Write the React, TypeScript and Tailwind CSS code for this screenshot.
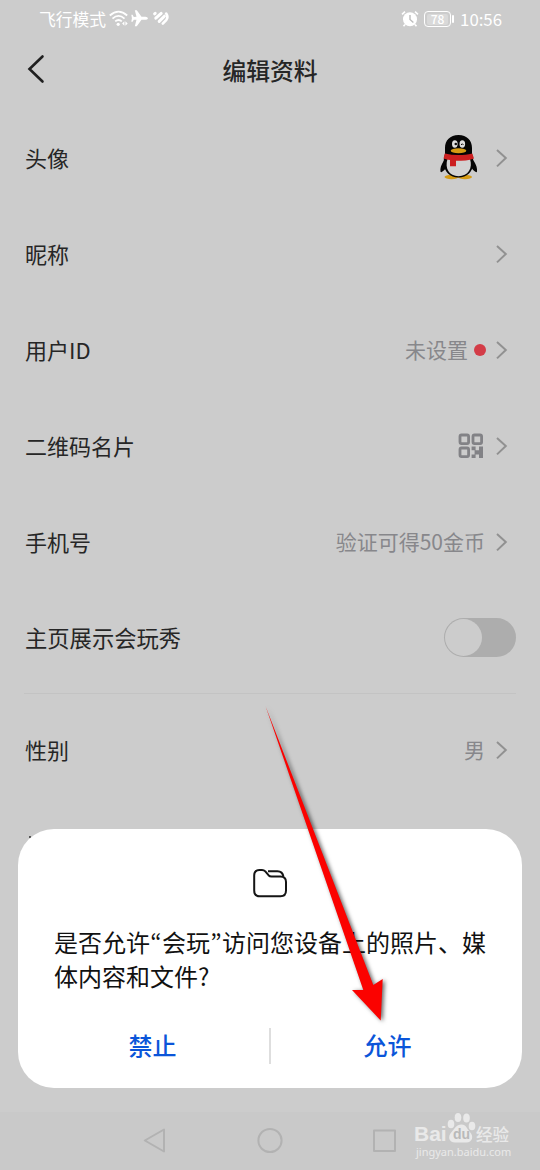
import type { ReactNode } from "react";

interface SettingRowProps {
	label: string;
	children?: ReactNode;
}

function ChevronRight() {
	return (
		<svg
			className="h-[22px] w-3"
			viewBox="0 0 12 22"
			fill="none"
			stroke="#919191"
			strokeWidth="2"
		>
			<path d="M1 3 L9.8 11 L1 19.4" />
		</svg>
	);
}

function SettingRow({ label, children }: SettingRowProps) {
	return (
		<div className="flex h-24 items-center justify-between pr-8 pl-[25px]">
			<span className="pb-[2px] text-[22px] leading-8 text-[#262626]">
				{label}
			</span>
			<div className="flex items-center text-[21px] leading-8 text-[#87878b]">
				{children}
				<ChevronRight />
			</div>
		</div>
	);
}

function StatusBar() {
	return (
		<div className="flex h-[38px] items-center justify-between pr-[38px] pl-[39px] text-white">
			<div className="flex items-center">
				<span className="pb-px text-[16.8px] leading-6">飞行模式</span>
				<svg className="ml-[3px] h-5 w-[60px]" viewBox="0 0 60 20" fill="none">
					<g stroke="white" strokeWidth="1.8">
						<path d="M0.8 6.5 Q9.5 -1.2 18.2 6.5" />
						<path d="M3.5 9.6 Q9.5 4.2 15.5 9.6" />
						<path d="M6.2 12.4 Q9.5 9.6 12.8 12.4" />
					</g>
					<circle cx="9.2" cy="15.3" r="1.6" fill="white" />
					<path d="M15.4 12.2v4.5l-2.3-2.2zM16.4 12.2v4.5l2.3-2.2z" fill="white" />
					<path
						d="M39 9.3Q38.5 10.8 36.5 10.8L32.5 10.8L27.8 17.3L25.8 17.3L27.5 10.8L24.8 10.7L23.6 12.8L22.3 12.8L22.9 9.3L22.3 5.8L23.6 5.8L24.8 7.9L27.5 7.8L25.8 1.3L27.8 1.3L32.5 7.8L36.5 7.8Q38.5 7.8 39 9.3Z"
						fill="white"
					/>
					<g stroke="white" strokeWidth="3" strokeLinecap="round">
						<path d="M45.6 4.8 L46.2 4.3" />
						<path d="M46.8 9.2 L52.2 4.4" />
						<path d="M50.2 12.4 L55.4 7.2" />
						<path d="M53.8 14.6 L57.4 10.8 Q59.5 8 57.2 4.5" strokeWidth="2.6" />
					</g>
				</svg>
			</div>
			<div className="flex items-center">
				<svg className="h-[18px] w-[18px]" viewBox="0 0 18 18" fill="none">
					<circle cx="9" cy="9.2" r="7" fill="white" />
					<path
						d="M1 4.4 L4 1.6 M17 4.4 L14 1.6 M4 14.5 L2.5 16.3 M14 14.5 L15.5 16.3"
						stroke="white"
						strokeWidth="1.6"
					/>
					<path d="M9 5v4.5l3.4 3" stroke="#bdbdbd" strokeWidth="1.4" />
				</svg>
				<div className="ml-[5px] flex h-4 w-[27px] items-center justify-center rounded-[4px] border-[1.5px] border-white">
					<span className="flex h-[11px] w-[21px] items-center justify-center rounded-[2px] bg-[#d9d9d9] text-[12px] leading-none font-medium">
						78
					</span>
				</div>
				<div className="ml-px h-2 w-[2px] rounded-sm bg-white" />
				<span className="ml-[6px] text-[16.8px] leading-6">10:56</span>
			</div>
		</div>
	);
}

function PenguinAvatar() {
	return (
		<svg className="mr-[17px] mb-[2px] h-[46px] w-10" viewBox="0 0 40 46">
			<path
				d="M7 24C3 29 1 33 1.5 37.5c.2 1.7 3.1-.2 5-3zM32.5 24c4 5 6 9 5.5 13.5-.2 1.7-3.1-.2-5-3z"
				fill="#050505"
			/>
			<ellipse cx="12.5" cy="43" rx="7" ry="2.2" fill="#d59b13" />
			<ellipse cx="26" cy="43" rx="7" ry="2.2" fill="#d59b13" />
			<path
				d="M19.5 1C11 1 6 6.5 6 14v6c-1 3-1.5 6-1.2 10C5.5 38 11 43.5 19.5 43.5S33.5 38 34.2 30c.3-4-.2-7-1.2-10v-6C33 6.5 28 1 19.5 1z"
				fill="#050505"
			/>
			<path
				d="M8.5 25h22.5c3 9-2 17.2-11.5 17.2S5.5 34 8.5 25z"
				fill="#d2d2d2"
			/>
			<path
				d="M5.8 19.5c9 2 18.5 2 27.5 0l1.7 5c-5 2-11 2.3-18 2.3v5.5h-6V26c-2.5-.3-4-.8-6.5-1.5z"
				fill="#cc1f20"
			/>
			<ellipse cx="15.8" cy="10" rx="2.8" ry="3.7" fill="#dedede" />
			<ellipse cx="23.3" cy="10" rx="2.8" ry="3.7" fill="#dedede" />
			<circle cx="16.8" cy="10" r="1.3" fill="#111" />
			<path d="M22 11Q23.3 8.5 24.5 11" stroke="#111" fill="none" />
			<ellipse cx="19.5" cy="16.7" rx="7.8" ry="2.5" fill="#d59b13" />
		</svg>
	);
}

function QrIcon() {
	return (
		<svg className="mr-3 h-[26px] w-[26px]" viewBox="0 0 26 26">
			<g fill="none" stroke="#828286" strokeWidth="2.8">
				<rect x="2" y="2" width="8.6" height="8.6" rx="1.5" />
				<rect x="15" y="2" width="8.6" height="8.6" rx="1.5" />
				<rect x="2" y="15" width="8.6" height="8.6" rx="1.5" />
			</g>
			<path
				d="M13.6 13.6h4v3.6h3.4v-3.6h4V25h-4v-3.6h-3.4V25h-4v-3.6h3v-4.2h-3z"
				fill="#828286"
			/>
		</svg>
	);
}

function PermissionDialog() {
	return (
		<div className="absolute top-[829px] left-[18px] flex h-[259px] w-[504px] flex-col rounded-[36px] bg-white pt-[39px]">
			<svg
				className="mx-auto h-[30px] w-9"
				viewBox="0 0 36 30"
				fill="none"
				stroke="#151515"
				strokeWidth="2"
				strokeLinejoin="round"
			>
				<path d="M2.2 7.5Q2.2 2 7.5 2h2.5q2 0 3.3 1.4l3.2 3.8q1.2 1.3 3 1.3h9q5.5 0 5.5 5.5v8.5q0 5.7-5.5 5.7h-20.8q-5.5 0-5.5-5.7z" />
				<path d="M16 3.3h9.5q5 0 6 5.5" />
			</svg>
			<div className="mt-[27px] flex flex-col pl-9 text-[24px] leading-[34px] whitespace-nowrap text-[#111]">
				<div className="flex h-[34px]">
					<span>是否允许</span>
					<span className="w-3 text-center font-['Noto_Sans_CJK_KR']">“</span>
					<span>会玩</span>
					<span className="w-3 text-center font-['Noto_Sans_CJK_KR']">”</span>
					<span>访问您设备上的照片、媒</span>
				</div>
				<div className="h-[34px]">体内容和文件?</div>
			</div>
			<div className="mt-[35px] flex h-9 text-[24px] leading-8 font-medium text-[#0b55d9]">
				<button type="button" className="h-[34px] flex-1 pl-[18px]">
					禁止
				</button>
				<div className="h-9 w-[2px] bg-[#dedede]" />
				<button type="button" className="h-[34px] flex-1 pr-[18px]">
					允许
				</button>
			</div>
		</div>
	);
}

function NavigationBar() {
	return (
		<div className="absolute top-[1112px] left-0 flex h-[58px] w-full items-center bg-[#c9c9c9]">
			<svg
				className="ml-[140px] h-[30px] w-[260px]"
				viewBox="0 0 260 30"
				fill="none"
				stroke="#b2b2b2"
				strokeWidth="2"
				strokeLinejoin="round"
			>
				<path d="M4.8 14.5 L24 3.5 V25.5 Z" />
				<circle cx="130" cy="14.5" r="11.6" />
				<rect x="234" y="4.5" width="21" height="20.5" />
			</svg>
		</div>
	);
}

function Watermark() {
	return (
		<div className="absolute top-[1112px] left-[414px] w-[100px] text-[#e9e9e9]">
			<div className="flex h-[31px] items-end">
				<span className="w-[33px] font-['Liberation_Sans'] text-[21px] leading-[18px] font-bold">
					Bai
				</span>
				<div className="relative h-[31px] w-[29px]">
					<svg className="h-full w-full" viewBox="0 0 29 31" fill="#e9e9e9">
						<ellipse cx="4" cy="12" rx="3.3" ry="4.3" />
						<ellipse cx="11" cy="5.5" rx="3.3" ry="4.5" />
						<ellipse cx="19.5" cy="6" rx="3.3" ry="4.5" />
						<ellipse cx="25" cy="14" rx="3.3" ry="4.3" />
						<path d="M14.5 12.5c5 0 5 4 8 7 5 5 2.5 11-3 11H8c-6 0-8-6-3-11 3-3 4-7 9.5-7z" />
					</svg>
					<span className="absolute top-[14px] left-[6px] font-['Liberation_Sans'] text-[14px] leading-4 font-bold text-[#b9b9b9]">
						du
					</span>
				</div>
				<span className="text-[16.5px] leading-[18px] font-medium">经验</span>
			</div>
			<div className="mt-px ml-[2px] font-['Noto_Sans'] text-[11px] leading-[15px] whitespace-nowrap">
				jingyan.baidu.com
			</div>
		</div>
	);
}

function PointerArrow() {
	return (
		<svg
			className="pointer-events-none absolute top-[700px] left-[260px] h-[330px] w-[140px] drop-shadow-[2px_1px_2px_rgba(0,0,0,0.6)]"
			viewBox="260 700 140 330"
		>
			<path
				d="M265.5 706 L373.3 985 L382.7 979 L380.7 1020.5 L352 990 L363.3 990 Z"
				fill="#fb0200"
			/>
		</svg>
	);
}

export default function App() {
	return (
		<div className="relative h-[1170px] w-[540px] overflow-hidden bg-[#cccccc] font-['Noto_Sans_CJK_SC',sans-serif]">
			<StatusBar />
			<header className="grid h-16 grid-cols-[64px_1fr_64px] items-center">
				<svg
					className="ml-[26px] h-8 w-5"
					viewBox="0 0 20 32"
					fill="none"
					stroke="#202020"
					strokeWidth="2.6"
					strokeLinecap="round"
				>
					<path d="M16.5 2.5 L3.5 15 L16.5 27.5" />
				</svg>
				<h1 className="pb-px text-center text-[23.8px] leading-8 font-medium text-[#262626]">
					编辑资料
				</h1>
			</header>

			<main className="pt-2">
				<SettingRow label="头像">
					<PenguinAvatar />
				</SettingRow>
				<SettingRow label="昵称" />
				<SettingRow label="用户ID">
					<span className="pb-[2px]">未设置</span>
					<span className="mr-[10px] ml-[6px] h-3 w-3 rounded-full bg-[#d33c47]" />
				</SettingRow>
				<SettingRow label="二维码名片">
					<QrIcon />
				</SettingRow>
				<SettingRow label="手机号">
					<span className="mr-[11px] pb-[2px]">验证可得50金币</span>
				</SettingRow>
				<div className="flex h-24 items-center justify-between pr-6 pl-[25px]">
					<span className="pb-[2px] text-[22.3px] leading-8 text-[#262626]">
						主页展示会玩秀
					</span>
					<div className="mb-[2px] flex h-[39px] w-[72px] items-center rounded-full bg-[#adadad] p-px">
						<div className="h-[37px] w-[37px] rounded-full bg-[#cccccc]" />
					</div>
				</div>
				<div className="mx-6 mt-[7px] mb-2 h-px bg-[#c3c3c3]" />
				<SettingRow label="性别">
					<span className="mr-[11px] pb-[2px]">男</span>
				</SettingRow>
				{/* top of the next row, mostly covered by the dialog */}
				<div className="mt-[38px] ml-[29px] h-[2px] w-[2px] bg-[#555]" />
			</main>

			<PermissionDialog />
			<NavigationBar />
			<Watermark />
			<PointerArrow />
		</div>
	);
}
